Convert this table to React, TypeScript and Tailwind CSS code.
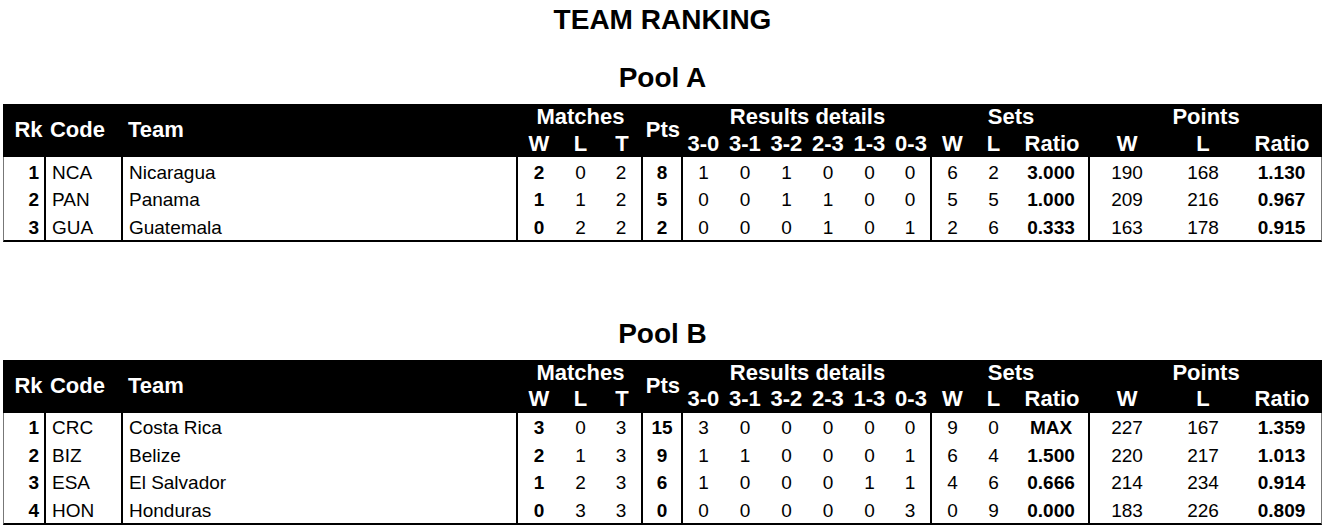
import React from 'react';

type Row = {
  rk: number;
  code: string;
  team: string;
  mw: number;
  ml: number;
  mt: number;
  pts: number;
  res: number[];
  sw: number;
  sl: number;
  sr: string;
  pw: number;
  pl: number;
  pr: string;
};

const poolA: Row[] = [
  { rk: 1, code: 'NCA', team: 'Nicaragua', mw: 2, ml: 0, mt: 2, pts: 8, res: [1, 0, 1, 0, 0, 0], sw: 6, sl: 2, sr: '3.000', pw: 190, pl: 168, pr: '1.130' },
  { rk: 2, code: 'PAN', team: 'Panama', mw: 1, ml: 1, mt: 2, pts: 5, res: [0, 0, 1, 1, 0, 0], sw: 5, sl: 5, sr: '1.000', pw: 209, pl: 216, pr: '0.967' },
  { rk: 3, code: 'GUA', team: 'Guatemala', mw: 0, ml: 2, mt: 2, pts: 2, res: [0, 0, 0, 1, 0, 1], sw: 2, sl: 6, sr: '0.333', pw: 163, pl: 178, pr: '0.915' },
];

const poolB: Row[] = [
  { rk: 1, code: 'CRC', team: 'Costa Rica', mw: 3, ml: 0, mt: 3, pts: 15, res: [3, 0, 0, 0, 0, 0], sw: 9, sl: 0, sr: 'MAX', pw: 227, pl: 167, pr: '1.359' },
  { rk: 2, code: 'BIZ', team: 'Belize', mw: 2, ml: 1, mt: 3, pts: 9, res: [1, 1, 0, 0, 0, 1], sw: 6, sl: 4, sr: '1.500', pw: 220, pl: 217, pr: '1.013' },
  { rk: 3, code: 'ESA', team: 'El Salvador', mw: 1, ml: 2, mt: 3, pts: 6, res: [1, 0, 0, 0, 1, 1], sw: 4, sl: 6, sr: '0.666', pw: 214, pl: 234, pr: '0.914' },
  { rk: 4, code: 'HON', team: 'Honduras', mw: 0, ml: 3, mt: 3, pts: 0, res: [0, 0, 0, 0, 0, 3], sw: 0, sl: 9, sr: '0.000', pw: 183, pl: 226, pr: '0.809' },
];

// column widths measured off the screenshot
const widths = [43, 77, 395, 42, 41, 42, 40, 41, 42, 41, 42, 41, 42, 41, 41, 76, 74, 78, 80];
const resultLabels = ['3-0', '3-1', '3-2', '2-3', '1-3', '0-3'];

const PoolTable: React.FC<{ title: string; rows: Row[] }> = ({ title, rows }) => {
  return (
    <div>
      <h2 className="text-[28px] leading-[32px] font-bold text-center mb-[10px]">{title}</h2>
      <table className="table-fixed border-separate border-spacing-0 w-[1319px] mx-auto">
        <colgroup>
          {widths.map((w, i) => (
            <col key={i} style={{ width: w }} />
          ))}
        </colgroup>
        <thead className="bg-black text-white text-[22px] font-bold">
          <tr className="h-[26.5px] leading-[26.5px] [&>th]:py-0">
            <th rowSpan={2} className="text-center pl-[7px] pr-0 border-l border-black">Rk</th>
            <th rowSpan={2} className="text-left pl-[4px]">Code</th>
            <th rowSpan={2} className="text-left pl-[5px]">Team</th>
            <th colSpan={3} className="text-center">Matches</th>
            <th rowSpan={2} className="text-center">Pts</th>
            <th colSpan={6} className="text-center">Results details</th>
            <th colSpan={3} className="text-center">Sets</th>
            <th colSpan={3} className="text-center">Points</th>
          </tr>
          <tr className="h-[26.5px] leading-[26.5px] [&>th]:py-0">
            <th>W</th>
            <th>L</th>
            <th>T</th>
            {resultLabels.map((l) => (
              <th key={l}>{l}</th>
            ))}
            <th>W</th>
            <th>L</th>
            <th>Ratio</th>
            <th>W</th>
            <th>L</th>
            <th>Ratio</th>
          </tr>
        </thead>
        <tbody className="text-[19px] text-black">
          {rows.map((r, idx) => {
            const last = idx === rows.length - 1 ? 'border-b-2 border-b-black' : '';
            return (
              <tr key={r.code} className="h-[27.5px] leading-[25px] [&>td]:pt-[2.5px] [&>td]:pb-0">
                <td className={`font-bold text-right pr-[5px] border-l border-l-[#777] border-r-2 border-r-black ${last}`}>{r.rk}</td>
                <td className={`text-left pl-[6px] border-r-2 border-r-black ${last}`}>{r.code}</td>
                <td className={`text-left pl-[6px] border-r-2 border-r-black ${last}`}>{r.team}</td>
                <td className={`text-center font-bold ${last}`}>{r.mw}</td>
                <td className={`text-center ${last}`}>{r.ml}</td>
                <td className={`text-center border-r-2 border-r-black ${last}`}>{r.mt}</td>
                <td className={`text-center font-bold border-r-2 border-r-black ${last}`}>{r.pts}</td>
                {r.res.map((v, i) => (
                  <td key={i} className={`text-center ${i === 5 ? 'border-r-2 border-r-black' : ''} ${last}`}>{v}</td>
                ))}
                <td className={`text-center ${last}`}>{r.sw}</td>
                <td className={`text-center ${last}`}>{r.sl}</td>
                <td className={`text-center font-bold border-r-2 border-r-black ${last}`}>{r.sr}</td>
                <td className={`text-center ${last}`}>{r.pw}</td>
                <td className={`text-center ${last}`}>{r.pl}</td>
                <td className={`text-center font-bold border-r border-r-[#777] ${last}`}>{r.pr}</td>
              </tr>
            );
          })}
        </tbody>
      </table>
    </div>
  );
};

export default function App() {
  return (
    <div className="bg-white text-black w-[1325px] min-h-[531px] pt-[4px]" style={{ fontFamily: '"Liberation Sans", Arial, sans-serif' }}>
      <h1 className="text-[28px] leading-[32px] font-bold text-center mb-[26px]">TEAM RANKING</h1>
      <PoolTable title="Pool A" rows={poolA} />
      <div className="h-[76px]" />
      <PoolTable title="Pool B" rows={poolB} />
    </div>
  );
}
